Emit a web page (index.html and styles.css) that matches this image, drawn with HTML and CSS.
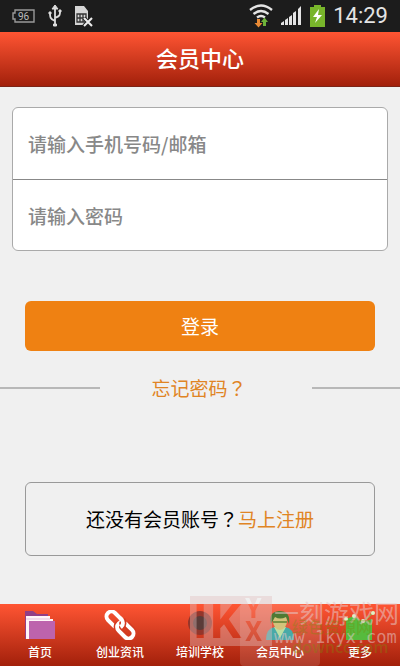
FILE: index.html
```html
<!DOCTYPE html>
<html lang="zh-CN">
<head>
<meta charset="utf-8">
<meta name="viewport" content="width=device-width, initial-scale=1">
<title>会员中心</title>
<link rel="stylesheet" href="styles.css">
</head>
<body>
<div class="status">
  <div class="status-group">
    <svg width="24" height="16" viewBox="0 0 24 16"><path d="M3 2h19v12H3V11H1V5h2z" fill="none" stroke="#999" stroke-width="1.4"/><text x="6" y="12" class="battery-text">96</text></svg>
    <svg width="14" height="24" viewBox="0 0 14 24" fill="none" stroke="#ddd" stroke-width="1.8"><path d="M7 4v16M7 17C2 15 2 13 2 9M7 14c5-2 5-3 5-6"/><path d="M7 1l3 4H4zM5.500 20h3v2h-3zM1 8h2v2H1zM11 6h2v2h-2z" fill="#ddd" stroke-width="1"/></svg>
    <svg width="19" height="23" viewBox="0 0 19 23"><path d="M1 1h9l4 5v14H1z" fill="#d5d5d5"/><path d="M3 9h9v8H3zM3 13h9M6 9v8M9 9v8" fill="none" stroke="#333" stroke-width="1.3"/><path d="M10 13l8 8M18 13l-8 8" stroke="#222" stroke-width="4"/><path d="M10 13l8 8M18 13l-8 8" stroke="#eee" stroke-width="2"/></svg>
  </div>
  <div class="status-group status-right">
    <svg width="24" height="24" viewBox="0 0 24 24"><path d="M1 6Q12-3 23 6M4.500 10q7.500-6 15 0M8 13.500q4-3 8 0" fill="none" stroke="#e4e4e4" stroke-width="2.300"/><path d="M8 15v4H5.500l4 4.500 4-4.500H11v-4z" fill="#e98a35"/><path d="M14 22v-4h-2l3.500-4.500L19 18h-2v4z" fill="#6eb33a"/></svg>
    <svg width="21" height="20" viewBox="0 0 21 20" fill="#e4e4e4"><path d="M0 17l3-2v4H0zM4 14l3-2v7H4zM8 11l3-2v10H8zM12 7l3-2v14h-3zM17 3l3-3v19h-3z"/></svg>
    <svg width="15" height="22" viewBox="0 0 15 22"><path d="M4 0h7v2h4v20H0V2h4z" fill="#78b52b"/><path d="M9 4L3 12h4l-2 6 7-8H8z" fill="#fff"/></svg>
    <time class="clock">14:29</time>
  </div>
</div>
<header class="title-bar"><h1>会员中心</h1></header>
<main class="content">
  <form class="login">
    <div class="fields">
      <input type="text" aria-label="手机号码或邮箱" placeholder="请输入手机号码/邮箱">
      <input type="password" aria-label="密码" placeholder="请输入密码">
    </div>
    <button class="submit" type="button">登录</button>
  </form>
  <div class="forgot"><a href="#forgot">忘记密码<span class="mark" lang="zh-TW">？</span></a></div>
  <p class="register">还没有会员账号<span class="mark" lang="zh-TW">？</span><a href="#register">马上注册</a></p>
</main>
<nav class="tabs">
  <a href="#home"><svg width="30" height="30" viewBox="0 0 30 30"><path d="M0 1h8l4 3h11v6H0z" fill="#923f86"/><path d="M1 6h24v3h3v4H5v16H1z" fill="#fff5f8"/><path d="M1 9h24" stroke="#e3bfd9"/><path d="M4 11h26v18H4z" fill="#bd63ad"/><path d="M0 4h1v25H0z" fill="#923f86"/></svg>首页</a>
  <a href="#news"><svg width="32" height="30" viewBox="0 0 32 30" fill="none"><g transform="rotate(45 16 15)" stroke="#fff" stroke-width="4"><rect x="-1" y="10" width="19" height="10" rx="5"/><path d="M20 10h8a5 5 0 0 1 0 10h-9a5 5 0 0 1-5-5" stroke="#d33b22" stroke-width="7"/><path d="M20 10h8a5 5 0 0 1 0 10h-9a5 5 0 0 1-5-5a5 5 0 0 1 5-5h2"/><path d="M14 10a5 5 0 0 1 4 5" stroke="#d33b22" stroke-width="7"/><path d="M11 10h2a5 5 0 0 1 5 5v1"/></g></svg>创业资讯</a>
  <a href="#school"><svg width="28" height="30" viewBox="0 0 28 30"><circle cx="14" cy="13" r="12" fill="#94362b"/><circle cx="14" cy="13" r="7" fill="#5a3b38"/></svg>培训学校</a>
  <a href="#member" class="current"><svg width="30" height="30" viewBox="0 0 30 30"><path d="M1 30q0-12 9-13h10q9 1 9 13z" fill="#48aaa8"/><path d="M9 17l6 11 6-11z" fill="#b9dfa4"/><ellipse cx="15" cy="11" rx="7" ry="9" fill="#d3c37b"/><path d="M6 14Q3 2 14 1q12 0 10 13l-3-7q-6 3-11 0z" fill="#4f7a34"/><path d="M8 12h14" stroke="#789044" stroke-width="2"/></svg>会员中心</a>
  <a href="#more"><svg width="34" height="30" viewBox="0 0 34 30"><path d="M3 9l8-3 9 6 9-3v21H3z" fill="#56bb3d"/><path d="M20 12l10-9" fill="none" stroke="#68ca4f"/><g fill="#ddf2c8"><circle cx="3" cy="9" r="2"/><circle cx="11" cy="6" r="2"/><circle cx="20" cy="11" r="2"/><circle cx="30" cy="3" r="2"/></g></svg>更多</a>
  <div class="stamp">
    <svg width="82" height="50" viewBox="0 0 82 50">
      <mask id="cut"><path d="M0 0h82v50H0z" fill="#fff"/><text x="3" y="42" class="cut-large">I</text><text x="20" y="42" class="cut-large">K</text><text x="55" y="22" class="cut-small">Y</text><text x="55" y="45" class="cut-small">X</text></mask>
      <path d="M0 0h82v50H0z" class="stamp-panel" mask="url(#cut)"/>
    </svg>
    <div class="stamp-words">
      <div class="stamp-name">一刻游戏网</div>
      <div class="stamp-url">www.1kyx.com</div>
      <div class="stamp-source">绿色资源网<br>downcc.com</div>
    </div>
  </div>
</nav>
</body>
</html>
```
FILE: styles.css
```css
* { box-sizing: border-box; }
body {
  margin: 0;
  min-height: 100vh;
  display: flex;
  flex-direction: column;
  background: #f0f0f0;
  font: 19px/28px "Noto Sans CJK SC", sans-serif;
}
a { color: #e08424; text-decoration: none; }
.mark { font-family: "Noto Sans CJK TC", sans-serif; }
.status { display: flex; justify-content: space-between; height: 32px; padding: 0 12px; background: #1c1c1c; }
.status-group { display: flex; align-items: center; gap: 12px; }
.status-right { gap: 8px; }
.battery-text { font: 10px Roboto, sans-serif; fill: #bbb; }
.clock { color: #e4e4e4; font: 22px/32px Roboto, sans-serif; }
.title-bar { height: 55px; background: linear-gradient(#ff5533, #a2200b); border-bottom: 1px solid #7d2417; }
h1 { margin: 0; color: #fff; font-size: 22px; font-weight: 500; line-height: 50px; text-align: center; }
.content { flex: 1; }
.fields { margin: 20px 12px 0; background: #fff; border: 1px solid #aaa; border-radius: 6px; overflow: hidden; }
.fields input { display: block; width: 100%; height: 71px; padding: 0 15px; border: 0; background: none; font: inherit; font-weight: 500; }
.fields input + input { border-top: 1px solid #888; }
.fields input::placeholder { color: #888; opacity: 1; }
.submit { display: block; width: calc(100% - 50px); height: 50px; margin: 50px 25px 0; border: 0; border-radius: 6px; background: #ef8112; color: #fff; font: inherit; }
.forgot { display: grid; grid-template-columns: 25% 1fr 22%; align-items: center; margin-top: 23px; }
.forgot a { justify-self: center; padding-right: 14px; }
.forgot::before, .forgot::after { content: ""; height: 2px; background: #b8b8b8; }
.register { margin: 80px 25px 0; padding: 22px 0; border: 1px solid #999; border-radius: 6px; text-align: center; }
.tabs { position: relative; display: grid; grid-template-columns: repeat(5, 1fr); height: 62px; background: linear-gradient(#ff5533, #a2200b); }
.tabs a { display: flex; flex-direction: column; align-items: center; gap: 2px; padding-top: 6px; color: #fff; font-size: 12px; font-weight: 500; line-height: 20px; }
.tabs .current { background: rgba(255, 255, 255, 0.13); border-radius: 4px; }
.stamp { position: absolute; right: 0; bottom: 20px; display: flex; gap: 2px; pointer-events: none; }
.stamp-panel { fill: rgba(225, 190, 190, 0.4); }
.cut-large { font: bold 49px Roboto, sans-serif; }
.cut-small { font: bold 27px Roboto, sans-serif; }
.stamp-words { position: relative; width: 126px; color: rgba(230, 200, 200, 0.55); white-space: nowrap; }
.stamp-name { font-size: 25px; line-height: 32px; }
.stamp-url { font: 17px/18px "DejaVu Sans Mono", monospace; }
.stamp-source { position: absolute; top: 20px; left: 18px; color: rgba(120, 140, 10, 0.35); font-size: 16px; font-weight: 500; line-height: 20px; }
```
